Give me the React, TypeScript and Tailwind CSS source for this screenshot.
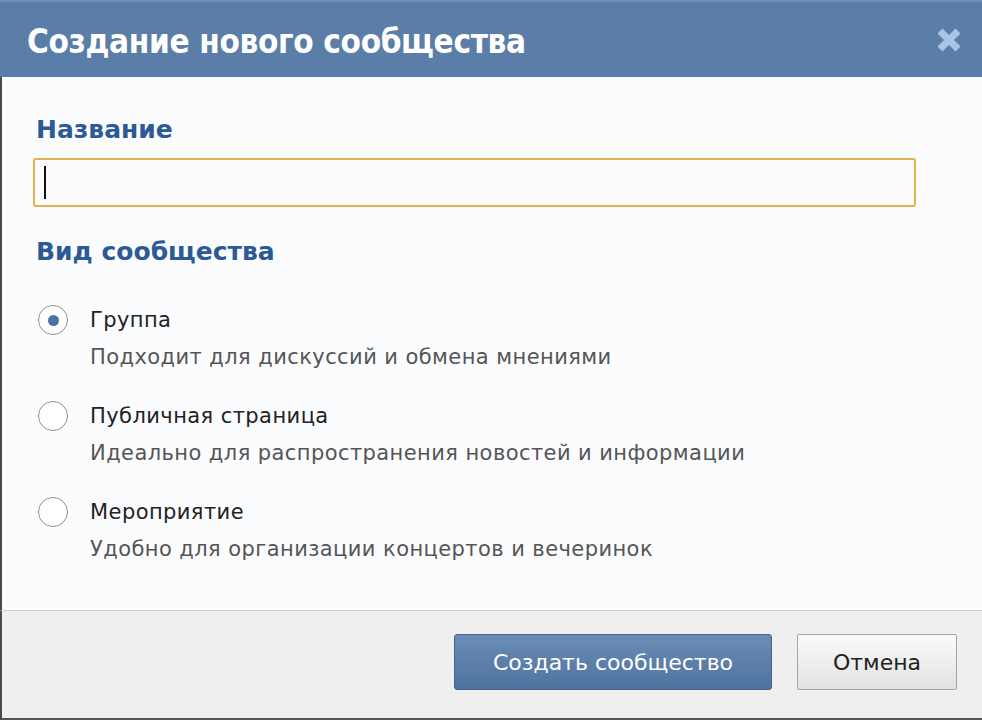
import { useState } from "react";

// ─── Data ────────────────────────────────────────────────────────────────────

const OPTIONS = [
  { id: "group", title: "Группа", hint: "Подходит для дискуссий и обмена мнениями" },
  { id: "public", title: "Публичная страница", hint: "Идеально для распространения новостей и информации" },
  { id: "event", title: "Мероприятие", hint: "Удобно для организации концертов и вечеринок" },
];

// ─── Sub-components ──────────────────────────────────────────────────────────

function Radio({ checked }: { checked: boolean }) {
  return (
    <span className="flex h-[30px] w-[30px] shrink-0 items-center justify-center rounded-full border border-[#8e8e8e] bg-white">
      {checked && <span className="h-[11px] w-[11px] rounded-full bg-[#4a74a6]" />}
    </span>
  );
}

function CloseIcon() {
  return (
    <svg width="26" height="26" viewBox="0 0 26 26">
      <path d="M4 4 L22 22 M22 4 L4 22" stroke="#a9c4e4" strokeWidth="7" strokeLinecap="butt" />
    </svg>
  );
}

// ─── Main component ──────────────────────────────────────────────────────────

export default function App() {
  const [kind, setKind] = useState("group");

  return (
    <div className="flex h-[720px] w-[982px] flex-col overflow-hidden bg-[#fbfcfd] font-['DejaVu_Sans',sans-serif]">
      {/* Header */}
      <div className="flex h-[77px] shrink-0 items-center justify-between border-t-2 border-[#7090b5] bg-[#5a7ea7] pl-[27px] pr-[20px]">
        <h1 className="pt-[3px] font-['DejaVu_Sans_Condensed',sans-serif] text-[33px] font-bold leading-none tracking-[-0.01em] text-white">
          Создание нового сообщества
        </h1>
        <CloseIcon />
      </div>

      {/* Body */}
      <div className="flex flex-1 flex-col border-l-2 border-[#4a4a4a] pl-[31px] pr-[66px] pt-[38px]">
        <h2 className="pl-[3px] text-[25px] font-bold leading-[30px] text-[#2c5a94]">Название</h2>
        <div className="mt-[13px] flex h-[49px] items-center rounded-[3px] border-2 border-[#e3b14e] bg-[#fcfcfc] pl-[9px]">
          <span className="h-[33px] w-[2px] bg-[#111]" />
        </div>
        <h2 className="mt-[30px] pl-[3px] text-[25px] font-bold leading-[30px] text-[#2c5a94]">Вид сообщества</h2>

        <div className="mt-[38px] flex flex-col gap-[32px]">
          {OPTIONS.map((o) => (
            <button
              key={o.id}
              type="button"
              onClick={() => setKind(o.id)}
              className="flex items-start gap-[22px] pl-[5px] text-left"
            >
              <Radio checked={kind === o.id} />
              <span className="flex flex-col pt-[3px]">
                <span className="text-[21px] leading-[24px] tracking-[0.02em] text-[#222]">{o.title}</span>
                <span className="mt-[13px] text-[21px] leading-[24px] tracking-[0.02em] text-[#555]">{o.hint}</span>
              </span>
            </button>
          ))}
        </div>
      </div>

      {/* Footer */}
      <div className="flex h-[110px] shrink-0 items-start justify-end gap-[25px] border-l-2 border-t border-b-2 border-l-[#4a4a4a] border-t-[#cfcfcf] border-b-[#555] bg-[#efeff0] pr-[25px] pt-[23px]">
        <button
          type="button"
          className="ml-[2px] h-[56px] w-[318px] rounded-[3px] border border-[#45648a] bg-gradient-to-b from-[#6b8db5] to-[#4f73a0] text-[22px] text-white"
        >
          Создать сообщество
        </button>
        <button
          type="button"
          className="h-[56px] w-[160px] rounded-[2px] border border-[#a5a5a5] bg-gradient-to-b from-[#fafafa] to-[#e2e2e2] text-[22px] text-[#222]"
        >
          Отмена
        </button>
      </div>
    </div>
  );
}
